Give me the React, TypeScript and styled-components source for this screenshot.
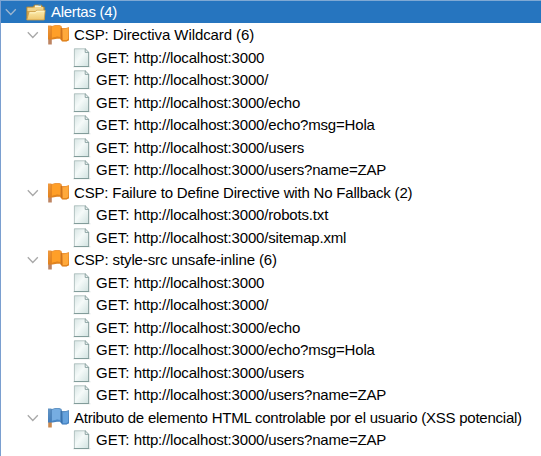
import React from "react";
import styled, { createGlobalStyle } from "styled-components";

const GlobalStyle = createGlobalStyle`
  * { box-sizing: border-box; }
  body { margin: 0; background: #fff; overflow: hidden; }
`;

const Tree = styled.div`
  width: 541px;
  height: 456px;
  overflow: hidden;
  background: #fff;
  border-top: 1px solid #7fa9d4;
  border-left: 1px solid #7a9fd0;
  font-family: "Liberation Sans", Arial, sans-serif;
  font-size: 15px;
  color: #000;
`;

const Row = styled.div<{ $indent: number; $selected?: boolean }>`
  display: flex;
  align-items: center;
  height: ${(p) => (p.$selected ? 22 : 22.5)}px;
  margin-bottom: ${(p) => (p.$selected ? 0.8 : 0)}px;
  padding-left: ${(p) => p.$indent}px;
  background: ${(p) => (p.$selected ? "#2675bf" : "transparent")};
  color: ${(p) => (p.$selected ? "#fff" : "#000")};
  white-space: pre;
`;

const Chevron = styled.svg<{ $gap: number }>`
  flex: none;
  width: 12px;
  height: 8px;
  margin-right: ${(p) => p.$gap}px;
  fill: none;
`;

const Icon = styled.svg<{ $w: number; $h: number; $gap: number }>`
  flex: none;
  width: ${(p) => p.$w}px;
  height: ${(p) => p.$h}px;
  margin-right: ${(p) => p.$gap}px;
`;

const Label = styled.span<{ $spacing: number }>`
  line-height: 20px;
  letter-spacing: ${(p) => p.$spacing}px;
`;

const Arrow = ({ gap, color }: { gap: number; color: string }) => (
  <Chevron $gap={gap} viewBox="0 0 12 8">
    <path d="M.8 1.2 5.8 6.5 10.8 1.2" stroke={color} strokeWidth="1.3" />
  </Chevron>
);

const Folder = () => (
  <Icon $w={20} $h={17} $gap={5} viewBox="0 0 20 17">
    <path d="M.8 15.5V3H7l1.5-2h7l1 2h1.8v12.5z" fill="#d5a64d" stroke="#ab8436" strokeWidth=".8" />
    <path d="M9 1.5h6v3H9z" fill="#f7f5df" />
    <path d="M12.5 1.2H15" stroke="#4f9ed6" />
    <path d="M1.5 3.8H8L9.5 3h7.7v4H1.5z" fill="#f0d48c" />
    <path d="M.8 16 3 7.8h6l1.5-1.5h8.7L18.2 16z" fill="url(#folderFront)" stroke="#c99a45" strokeWidth=".8" />
    <path d="M3.7 8.8h5.8L11 7.2h7.3" fill="none" stroke="#fff7cb" />
  </Icon>
);

const Flag = ({ tone }: { tone: "orange" | "blue" }) => {
  const o = tone === "orange";
  return (
    <Icon $w={22} $h={20} $gap={4} viewBox="0 0 22 20">
      <path d="M.2 2h3.6v17.5H.2z" fill={o ? "#bd8462" : "#c98950"} />
      <path
        d="M0 .5h3l1 .6L7 0h4.5l2 1 .6 2h2L18 3l3-1v13.3l-2.5 1.2H14l-1.8-2.8H9L4.5 14.5H0z"
        fill={`url(#${tone}Flag)`}
      />
      <path d="M3.8 2.3 6.5 .9h4.4l1.5.8v10.6l-3.4-.6-5.2 1.6z" fill={o ? "#ff9f28" : "#76ade2"} />
      <path d="m14.8 4.5 3-.5 2.4-.8v11.1l-2.7 1.1h-2.7z" fill={o ? "#ffa93b" : "#65a2dd"} />
      <path d="M13.4 3v12" stroke={o ? "#ce741d" : "#3972ad"} strokeWidth="1.3" />
      <path d="M3.2 1.2V14" stroke={o ? "#df8120" : "#477eb6"} strokeWidth=".8" />
      <path d="m4 13.3 5-1.3 4 .5M15 15.6h3.5l2-.8" fill="none" stroke={o ? "#df851f" : "#4d8bc8"} />
    </Icon>
  );
};

const Page = () => (
  <Icon $w={18} $h={20} $gap={5} viewBox="0 0 18 20">
    <path d="M0 18.8h17.5" stroke="#dce3e2" />
    <path d="M1 .5h11.6L16 4v14.7H1z" fill="url(#pageFill)" />
    <path d="M1.4 18.5V.8h11.2" fill="none" stroke="#a9bab9" strokeWidth=".8" />
    <path d="M15.7 4v14.7" stroke="#7b9392" strokeWidth=".9" />
    <path d="M1 18.5h15" stroke="#829c9a" />
    <path d="M12.2.8v3.6h3.6z" fill="#f8fbfa" stroke="#819b9a" strokeWidth=".9" />
  </Icon>
);

const Gradients = () => (
  <defs>
    <linearGradient id="folderFront" x2="0" y2="1">
      <stop stopColor="#fdeeb0" />
      <stop offset="1" stopColor="#edc66e" />
    </linearGradient>
    <linearGradient id="orangeFlag" x2="0" y2="1">
      <stop stopColor="#f09a40" />
      <stop offset="1" stopColor="#df7e18" />
    </linearGradient>
    <linearGradient id="blueFlag" x2="0" y2="1">
      <stop stopColor="#6596c5" />
      <stop offset="1" stopColor="#3e7aba" />
    </linearGradient>
    <linearGradient id="pageFill" x2="1" y2="1">
      <stop stopColor="#d6e4e3" />
      <stop offset=".45" stopColor="#f5faf9" />
      <stop offset="1" stopColor="#cfe1df" />
    </linearGradient>
  </defs>
);

const Definitions = styled.svg`
  display: block;
  width: 0;
  height: 0;
`;

const host = "http://localhost:3000";
const common = ["", "/", "/echo", "/echo?msg=Hola", "/users", "/users?name=ZAP"];

const alerts: { title: string; tone: "orange" | "blue"; spacing: number; paths: string[] }[] = [
  { title: "CSP: Directiva Wildcard (6)", tone: "orange", spacing: -0.09, paths: common },
  {
    title: "CSP: Failure to Define Directive with No Fallback (2)",
    tone: "orange",
    spacing: -0.19,
    paths: ["/robots.txt", "/sitemap.xml"],
  },
  { title: "CSP: style-src unsafe-inline (6)", tone: "orange", spacing: -0.12, paths: common },
  {
    title: "Atributo de elemento HTML controlable por el usuario (XSS potencial)",
    tone: "blue",
    spacing: -0.235,
    paths: ["/users?name=ZAP"],
  },
];

export default function App() {
  return (
    <>
      <GlobalStyle />
      <Tree>
        <Definitions>
          <Gradients />
        </Definitions>
        <Row $indent={4} $selected>
          <Arrow gap={9} color="#9eb6cf" />
          <Folder />
          <Label $spacing={-0.3}>Alertas (4)</Label>
        </Row>
        {alerts.map((alert) => (
          <React.Fragment key={alert.title}>
            <Row $indent={26}>
              <Arrow gap={9} color="#a8a8a8" />
              <Flag tone={alert.tone} />
              <Label $spacing={alert.spacing}>{alert.title}</Label>
            </Row>
            {alert.paths.map((path) => (
              <Row key={path} $indent={72}>
                <Page />
                <Label $spacing={0.05}>{"GET: "}</Label>
                <Label $spacing={-0.18}>{host + path}</Label>
              </Row>
            ))}
          </React.Fragment>
        ))}
      </Tree>
    </>
  );
}
